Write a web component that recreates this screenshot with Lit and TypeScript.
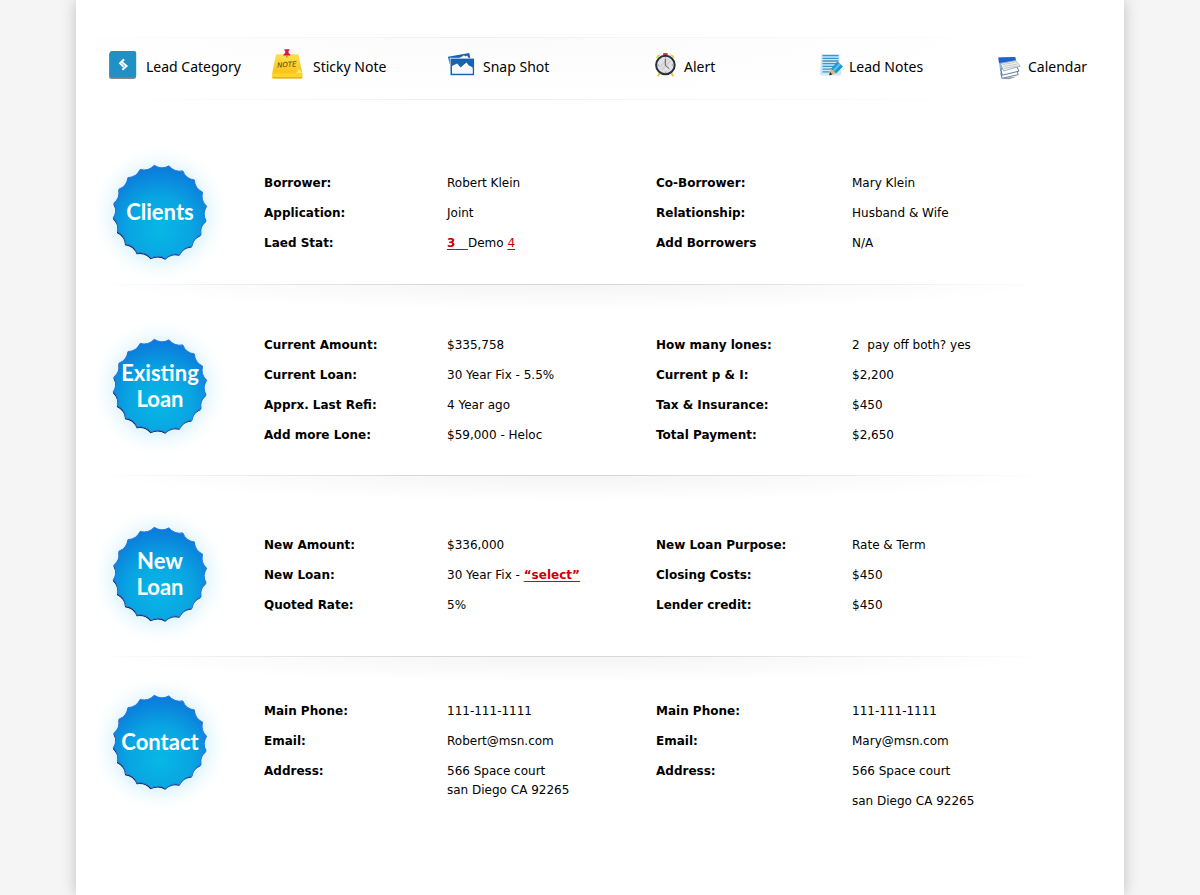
import { LitElement, html, css, svg, type TemplateResult } from "lit";
import { customElement, property } from "lit/decorators.js";

interface Field {
  label: string;
  value: unknown;
}

interface Group {
  variant: string;
  title: string[];
  left: Field[];
  right: Field[];
}

const icons: Record<string, TemplateResult> = {
  category: html`<svg width="31" height="40" viewBox="0 0 31 40" aria-hidden="true">
    <rect x="0" y="5" width="27" height="27" rx="2.5" fill="#8a8784" />
    <rect x="0.8" y="4" width="26.4" height="26.6" rx="2" fill="#2191c5" />
    <path d="M15.2 12.300 11 16.300l3.600 3.500M13.400 15.400l4.200 3.600-4.200 3.800" fill="none" stroke="#fff" stroke-width="1.900" />
  </svg>`,
  sticky: html`<svg width="35" height="40" viewBox="0 0 35 40" aria-hidden="true">
    <defs>
      <linearGradient id="n" x1="0" y1="0" x2="0" y2="1">
        <stop offset="0" stop-color="#ffe04e" />
        <stop offset="0.75" stop-color="#fcc41c" />
        <stop offset="1" stop-color="#ffdf3c" />
      </linearGradient>
    </defs>
    <path d="M4 7.3h22.4L30.3 26v4.2q0 1-1 1H1.2q-1 0-1-1V26z" fill="url(#n)" />
    <path d="M.3 26.8h30v3.4q0 1-1 1H1.3q-1 0-1-1z" fill="#fdd42c" />
    <path d="M.3 30.2q.2 1.2 1.2 1.2h27.6q1.1 0 1.2-1.2z" fill="#e5a813" />
    <path d="M21 26.3q5-.2 5.2-4.4 2 1.500 4 4.200z" fill="#ffe873" />
    <text x="5" y="20" transform="rotate(-4 15 18)" font-family="DejaVu Sans" font-size="7" font-style="italic" fill="#4a3f12">NOTE</text>
    <path d="M12.400 2.200h5v1.400l-.9.5.2 2 1.600 1.500v1h-6.800v-1l1.600-1.500.2-2-.9-.5z" fill="#d81848" />
    <path d="M14.900 8.500v2" stroke="#8b6b44" />
  </svg>`,
  snap: html`<svg width="29" height="40" viewBox="0 0 29 40" aria-hidden="true">
    <path d="M0 9.800 21.300 6l1.300 6.500L1.600 17z" fill="#1763ad" />
    <path d="M13 10.200 16 8.300l1.400 1.200 1.700-.9 2 3.400H9z" fill="#fff" />
    <path d="M1.700 10.800h25.200v18H1.700z" fill="#fff" />
    <path d="M2.500 11.600h23.600v16.600H2.500z" fill="#1763ad" />
    <path d="M4 26.400V19l5.200-2.600 3.300 4.200 6-5 2.300 2.800 3.700 1.800v6.200z" fill="#fff" />
    <path d="M4 26.400V21l4.800-2.300 3.600 4.200 6.100-5.200 2.100 2.600 4 1.500v4.600z" fill="#f3f8fc" />
  </svg>`,
  alert: html`<svg width="23" height="40" viewBox="0 0 23 40" aria-hidden="true">
    <path d="M5 26 2.800 29.200M16 26l2.400 3.200" stroke="#e9c52f" stroke-width="2" />
    <path d="M1.200 11.500Q1 7.500 6.200 7.400zM19.500 11.500Q19.700 7.500 14.500 7.400z" fill="#f0c828" />
    <rect x="8" y="6" width="4.800" height="2.600" rx="1" fill="#d83a35" />
    <circle cx="10.400" cy="18" r="9.300" fill="#e2e2e2" stroke="#27313d" stroke-width="2" />
    <path d="M4.500 20.500 13 11.800M6.500 23 15.500 14" stroke="#cfcfcf" stroke-width="1.600" />
    <path d="M10.300 12v6.300l4 3.400" fill="none" stroke="#555e68" />
    <path d="M10.400 10.200v1.400M10.400 24.500v1.400M2.700 18h1.400M16.800 18h1.400" stroke="#777" stroke-width=".8" />
  </svg>`,
  notes: html`<svg width="23" height="40" viewBox="0 0 23 40" aria-hidden="true">
    <path d="M1.500 7h18v12l2 7q0 2.500-2.500 2.500H2.500Q0 28.500 0 26z" fill="#c9e8f8" />
    <path d="M2.500 8.600h16M2.500 11.300h16M2.500 14h16M2.500 16.700h15M2.500 19.400h12M2.500 22.100h10M2.500 24.800h7" stroke="#3a97c9" stroke-width="1.300" />
    <path d="m17.500 14.600 5.500 5-6.800 7-5.300-4.800z" fill="#1999d4" />
    <path d="m19 16 1.800 1.600-6.800 7.200-1.600-1.500z" fill="#56c1ea" />
    <path d="m10.900 21.800 5.300 4.800-7 1.500z" fill="#e4b074" />
    <path d="m10 25 2.300 2.400-3.100.8z" fill="#242424" />
  </svg>`,
  calendar: html`<svg width="24" height="40" viewBox="0 0 24 40" aria-hidden="true">
    <path d="M2.500 31.500 19 29.500l-8 2.800z" fill="#9a9a9a" />
    <path d="M.3 10.400 17.200 10l1 4.500L3.200 31z" fill="#8fb4e4" />
    <path d="M3 26 18.500 23l1.700 4.600L4 31.400z" fill="#fff" stroke="#587796" stroke-width=".9" />
    <path d="M2.800 22 19 19.500l1.800 4.700-16.600 4z" fill="#fff" stroke="#476f9c" stroke-width=".9" />
    <path d="M.3 10.400 17.200 10l.8 3.600L1 16z" fill="#1e62cc" />
    <path d="m2.400 16.400 15-2.800 4.900 5.600L5.600 24z" fill="#f4f5f6" stroke="#7c97b4" stroke-width=".7" />
    <path d="m4.500 17.600 13-2.300M5.300 19.500l13.700-2.400M6 21.500l13.800-2.700" stroke="#c0c0c0" stroke-width=".9" />
  </svg>`,
};

/** Outline of the 20-point seal, pointed outside and slightly hollow between points. */
function sealPath(cx: number, cy: number): string {
  const at = (deg: number, r: number) => {
    const a = (deg * Math.PI) / 180;
    return `${(cx + r * Math.sin(a)).toFixed(2)} ${(cy - r * Math.cos(a)).toFixed(2)}`;
  };
  let d = `M${at(-7, 47)}`;
  for (let i = 0; i < 20; i++) {
    const a = -7 + i * 18;
    d += `Q${at(a + 9, 42)} ${at(a + 18, 47)}`;
  }
  return d + "Z";
}

@customElement("seal-badge")
export class SealBadge extends LitElement {
  @property({ attribute: false }) lines: string[] = [];

  static styles = css`
    :host {
      display: grid;
      width: 100px;
      height: 100px;
      place-items: center;
    }
    svg,
    .title {
      grid-area: 1 / 1;
    }
    svg {
      overflow: visible;
    }
    .title {
      z-index: 1;
      margin: 0;
      color: #fff;
      font: 700 22px/26px Lato, sans-serif;
      text-align: center;
    }
    .line {
      display: block;
    }
  `;

  render() {
    return html`
      <svg width="100" height="100" viewBox="0 0 100 100" aria-hidden="true">
        <defs>
          <radialGradient id="glow">
            <stop offset="0.6" stop-color="#a8e2f8" stop-opacity="0.42" />
            <stop offset="0.75" stop-color="#c8edfb" stop-opacity="0.22" />
            <stop offset="1" stop-color="#fff" stop-opacity="0" />
          </radialGradient>
          <radialGradient id="body" cx="0.5" cy="0.68" r="0.68">
            <stop offset="0" stop-color="#06b8e6" />
            <stop offset="0.5" stop-color="#09a5e2" />
            <stop offset="1" stop-color="#0b78da" />
          </radialGradient>
        </defs>
        <circle cx="50" cy="52" r="72" fill="url(#glow)" />
        <path d=${sealPath(49.5, 51.2)} fill="#06203f" />
        ${svg`<path d=${sealPath(50, 50)} fill="url(#body)" stroke="#2f78dc" stroke-width="1" stroke-linejoin="round" />`}
      </svg>
      <h2 class="title">${this.lines.map((l) => html`<span class="line">${l}</span>`)}</h2>
    `;
  }
}

@customElement("app-root")
export class AppRoot extends LitElement {
  static styles = css`
    :host {
      display: block;
      min-height: 100vh;
      background: #f5f5f5;
      color: #000;
      font: 12px/30px "DejaVu Sans", sans-serif;
    }
    .sheet {
      box-sizing: border-box;
      max-width: 1048px;
      min-height: 100vh;
      margin: 0 auto;
      padding-top: 37px;
      background: #fff;
      box-shadow: 0 0 14px rgba(0, 0, 0, 0.22);
    }
    .toolbar {
      display: grid;
      grid-template-columns: 163fr 176fr 207fr 165fr 178fr 126fr;
      align-items: center;
      padding: 10px 0 13px 33px;
      background:
        linear-gradient(90deg, transparent, #f0f0f0 40%, transparent) 15% 0 / 88% 1px no-repeat,
        linear-gradient(90deg, transparent, #f0f0f0 40%, transparent) 15% 100% / 88% 1px no-repeat,
        radial-gradient(ellipse at 45% 0, rgba(0, 0, 0, 0.016), transparent 70%) 15% 0 / 88% 100% no-repeat;
    }
    .tool {
      display: flex;
      align-items: center;
      gap: 6px;
      color: inherit;
      font: 14px/20px "Noto Sans", sans-serif;
      text-decoration: none;
      white-space: nowrap;
    }
    .tool svg {
      flex: none;
    }
    .group {
      display: grid;
      grid-template-columns: 154fr 392fr 468fr;
      align-items: start;
      padding-left: 34px;
    }
    .group + .group {
      background:
        linear-gradient(90deg, transparent, #d8d8d8 35%, #d8d8d8 55%, transparent) 20% 0 / 91% 1px no-repeat,
        radial-gradient(ellipse 50% 100% at 50% 0, rgba(0, 0, 0, 0.045), transparent) 20% 0 / 91% 26px no-repeat;
    }
    .clients {
      padding-top: 62px;
      padding-bottom: 22px;
    }
    .existing {
      padding-top: 46px;
      padding-bottom: 25px;
    }
    .existing seal-badge {
      margin-top: 6px;
    }
    .new {
      padding-top: 49px;
      padding-bottom: 32px;
    }
    .contact {
      padding-top: 36px;
      padding-bottom: 60px;
    }
    .fields {
      display: grid;
      margin: 6px 0 0;
    }
    .existing .fields {
      margin-top: 0;
    }
    .contact .fields {
      margin-top: 4px;
    }
    .left {
      grid-template-columns: 183fr 209fr;
    }
    .right {
      grid-template-columns: 196fr 272fr;
    }
    .label {
      font-weight: 700;
    }
    .value {
      margin: 0;
    }
    .tight {
      display: block;
      padding-top: 6px;
      line-height: 19px;
    }
    .loose {
      display: block;
    }
    .link {
      color: #cc0000;
      text-underline-offset: 2px;
      white-space: pre;
    }
    .strong {
      font-weight: 700;
    }
  `;

  private tools = [
    { icon: "category", label: "Lead Category" },
    { icon: "sticky", label: "Sticky Note" },
    { icon: "snap", label: "Snap Shot" },
    { icon: "alert", label: "Alert" },
    { icon: "notes", label: "Lead Notes" },
    { icon: "calendar", label: "Calendar" },
  ];

  private groups: Group[] = [
    {
      variant: "clients",
      title: ["Clients"],
      left: [
        { label: "Borrower:", value: "Robert Klein" },
        { label: "Application:", value: "Joint" },
        {
          label: "Laed Stat:",
          value: html`<a class="link strong" href="#stat">3${"\u00a0\u00a0\u00a0"}</a>Demo <a class="link" href="#demo">4</a>`,
        },
      ],
      right: [
        { label: "Co-Borrower:", value: "Mary Klein" },
        { label: "Relationship:", value: "Husband & Wife" },
        { label: "Add Borrowers", value: "N/A" },
      ],
    },
    {
      variant: "existing",
      title: ["Existing", "Loan"],
      left: [
        { label: "Current Amount:", value: "$335,758" },
        { label: "Current Loan:", value: "30 Year Fix - 5.5%" },
        { label: "Apprx. Last Refi:", value: "4 Year ago" },
        { label: "Add more Lone:", value: "$59,000 - Heloc" },
      ],
      right: [
        { label: "How many lones:", value: "2\u00a0 pay off both? yes" },
        { label: "Current p & I:", value: "$2,200" },
        { label: "Tax & Insurance:", value: "$450" },
        { label: "Total Payment:", value: "$2,650" },
      ],
    },
    {
      variant: "new",
      title: ["New", "Loan"],
      left: [
        { label: "New Amount:", value: "$336,000" },
        { label: "New Loan:", value: html`30 Year Fix - <a class="link strong" href="#select">“select”</a>` },
        { label: "Quoted Rate:", value: "5%" },
      ],
      right: [
        { label: "New Loan Purpose:", value: "Rate & Term" },
        { label: "Closing Costs:", value: "$450" },
        { label: "Lender credit:", value: "$450" },
      ],
    },
    {
      variant: "contact",
      title: ["Contact"],
      left: [
        { label: "Main Phone:", value: "111-111-1111" },
        { label: "Email:", value: "Robert@msn.com" },
        { label: "Address:", value: html`<span class="tight">566 Space court<br />san Diego CA 92265</span>` },
      ],
      right: [
        { label: "Main Phone:", value: "111-111-1111" },
        { label: "Email:", value: "Mary@msn.com" },
        {
          label: "Address:",
          value: html`<span class="loose">566 Space court</span><span class="loose">san Diego CA 92265</span>`,
        },
      ],
    },
  ];

  private fields(side: string, list: Field[]) {
    return html`<dl class="fields ${side}">
      ${list.map((f) => html`<dt class="label">${f.label}</dt><dd class="value">${f.value}</dd>`)}
    </dl>`;
  }

  render() {
    return html`
      <main class="sheet">
        <nav class="toolbar">
          ${this.tools.map((t) => html`<a class="tool" href="#${t.icon}">${icons[t.icon]}<span>${t.label}</span></a>`)}
        </nav>
        ${this.groups.map(
          (g) => html`<section class="group ${g.variant}">
            <seal-badge .lines=${g.title}></seal-badge>
            ${this.fields("left", g.left)} ${this.fields("right", g.right)}
          </section>`
        )}
      </main>
    `;
  }
}
